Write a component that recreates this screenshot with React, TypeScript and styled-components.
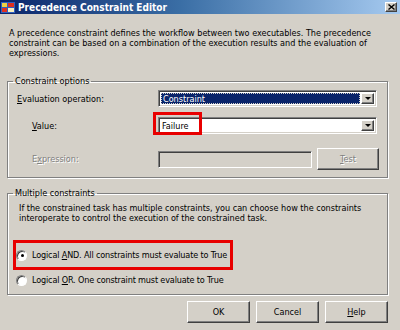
import React from 'react';
import styled, { createGlobalStyle, css } from 'styled-components';

const GlobalStyle = createGlobalStyle`
  html, body {
    margin: 0;
    padding: 0;
    background: #d4d0c8;
  }
  body {
    font-family: 'DejaVu Sans Condensed', 'DejaVu Sans', sans-serif;
    font-stretch: condensed;
    font-size: 9px;
    color: #000;
  }
`;

const raised = css`
  border: 1px solid;
  border-color: #fff #404040 #404040 #fff;
  box-shadow: inset -1px -1px 0 #808080;
`;

const sunken = css`
  border: 1px solid;
  border-color: #808080 #fff #fff #808080;
  box-shadow: inset 1px 1px 0 #404040, inset -1px -1px 0 #d4d0c8;
`;

const Window = styled.div`
  width: 400px;
  height: 330px;
  overflow: hidden;
  display: flex;
  flex-direction: column;
  background: #d4d0c8;
`;

const TitleBar = styled.div`
  height: 14px;
  display: flex;
  align-items: center;
  gap: 3px;
  padding: 0 3px 0 1px;
  background: linear-gradient(to right, #0a246a 0%, #3a6ea5 45%, #a6caf0 100%);
`;

const TitleText = styled.span`
  color: #fff;
  font-weight: bold;
  font-size: 10px;
`;

const CloseButton = styled.div`
  ${raised};
  box-sizing: border-box;
  margin-left: auto;
  width: 12px;
  height: 10px;
  background: #d4d0c8;
  display: flex;
  align-items: center;
  justify-content: center;
`;

const Body = styled.div`
  padding: 14px 12px 0 7px;
  display: flex;
  flex-direction: column;
`;

const Intro = styled.p`
  margin: 0 0 0 2px;
  line-height: 10px;
  white-space: nowrap;
`;

const Group = styled.fieldset<{ $top: number }>`
  margin: ${(p) => p.$top}px 0 0;
  border: 1px solid #808080;
  box-shadow: 1px 1px 0 #fff, inset 1px 1px 0 #fff;
  min-width: 0;
`;

const Legend = styled.legend`
  padding: 0 2px;
  line-height: 12px;
`;

const OptionsGroup = styled(Group)`
  padding: 3px 10px 7px 9px;
`;

const MultipleGroup = styled(Group)`
  padding: 4px 10px 8px 5px;
`;

const LegendOptions = styled(Legend)`
  margin-left: -4px;
`;

const LegendMultiple = styled(Legend)`
  margin-left: 0;
`;

const FormGrid = styled.div`
  display: grid;
  grid-template-columns: 141px 221px;
  row-gap: 10px;
  align-items: center;
`;

const Label = styled.span<{ $indent?: boolean; $disabled?: boolean }>`
  padding-left: ${(p) => (p.$indent ? 15 : 0)}px;
  color: ${(p) => (p.$disabled ? '#808080' : '#000')};
  text-shadow: ${(p) => (p.$disabled ? '1px 1px 0 #fff' : 'none')};
`;

const Combo = styled.div`
  ${sunken};
  position: relative;
  box-sizing: border-box;
  width: 219px;
  height: 17px;
  background: #fff;
  display: flex;
  padding: 2px;
`;

const ComboValue = styled.div<{ $selected?: boolean }>`
  flex: 1;
  display: flex;
  align-items: center;
  padding-left: ${(p) => (p.$selected ? 2 : 1)}px;
  margin-right: 1px;
  color: ${(p) => (p.$selected ? '#fff' : '#000')};
  background: ${(p) => (p.$selected ? '#0a246a' : 'transparent')};
  outline: ${(p) => (p.$selected ? '1px dotted #d4d0c8' : 'none')};
  outline-offset: -1px;
`;

const ComboArrow = styled.div`
  ${raised};
  box-sizing: border-box;
  width: 13px;
  background: #d4d0c8;
  display: flex;
  align-items: center;
  justify-content: center;
`;

const Arrow = styled.span`
  width: 0;
  height: 0;
  border-left: 3px solid transparent;
  border-right: 3px solid transparent;
  border-top: 3px solid #000;
`;

const Highlight = styled.div`
  box-sizing: border-box;
  border: 3px solid #e80000;
`;

const ValueHighlight = styled(Highlight)`
  position: absolute;
  left: -6px;
  top: -6px;
  width: 49px;
  height: 23px;
  pointer-events: none;
`;

const ExpressionRow = styled.div`
  display: flex;
  align-items: center;
  margin-top: 4px;
`;

const TextBox = styled.div`
  ${sunken};
  box-sizing: border-box;
  width: 154px;
  height: 17px;
  background: #d4d0c8;
`;

const Button = styled.button<{ $disabled?: boolean }>`
  ${raised};
  box-sizing: border-box;
  width: 63px;
  height: 22px;
  padding: 0;
  background: #d4d0c8;
  font: inherit;
  color: ${(p) => (p.$disabled ? '#808080' : '#000')};
  text-shadow: ${(p) => (p.$disabled ? '1px 1px 0 #fff' : 'none')};
`;

const TestButton = styled(Button)`
  margin-left: auto;
  width: 62px;
`;

const Description = styled.p`
  margin: 0 0 0 6px;
  line-height: 10px;
  white-space: nowrap;
`;

const RadioRow = styled.div`
  display: flex;
  align-items: center;
  gap: 5px;
  white-space: nowrap;
`;

const HighlightRow = styled(Highlight)`
  display: flex;
  align-items: center;
  gap: 5px;
  width: 220px;
  height: 30px;
  margin-top: 17px;
  white-space: nowrap;
  overflow: visible;
`;

const PlainRow = styled(RadioRow)`
  margin-top: 4px;
  padding-left: 3px;
  height: 12px;
`;

const RadioText = styled.span`
  flex-shrink: 0;
  letter-spacing: -0.15px;
`;

const Radio = styled.span<{ $checked?: boolean }>`
  flex-shrink: 0;
  box-sizing: border-box;
  width: 11px;
  height: 11px;
  border-radius: 50%;
  border: 1px solid;
  border-color: #808080 #fff #fff #808080;
  box-shadow: inset 1px 1px 0 #404040;
  background: #fff;
  display: flex;
  align-items: center;
  justify-content: center;

  &::after {
    content: '';
    width: 3px;
    height: 3px;
    border-radius: 50%;
    background: ${(p) => (p.$checked ? '#000' : 'transparent')};
    margin: 1px 0 0 1px;
  }
`;

const ButtonRow = styled.div`
  display: flex;
  justify-content: flex-end;
  gap: 6px;
  margin-top: 6px;
`;

const TitleIcon = () => (
  <svg width="14" height="13" viewBox="0 0 14 13">
    <rect x="0" y="1" width="14" height="11" fill="#3060c0" />
    <rect x="1" y="2" width="5" height="4" fill="#f0d040" />
    <rect x="7" y="2" width="6" height="4" fill="#e03020" />
    <rect x="1" y="7" width="5" height="4" fill="#e03020" />
    <rect x="7" y="7" width="6" height="4" fill="#f8f0c0" />
  </svg>
);

const CloseIcon = () => (
  <svg width="7" height="6" viewBox="0 0 7 6">
    <path d="M0.5 0.5 L6.5 5.5 M6.5 0.5 L0.5 5.5" stroke="#000" strokeWidth="1.4" />
  </svg>
);

const App = () => (
  <>
    <GlobalStyle />
    <Window>
      <TitleBar>
        <TitleIcon />
        <TitleText>Precedence Constraint Editor</TitleText>
        <CloseButton>
          <CloseIcon />
        </CloseButton>
      </TitleBar>
      <Body>
        <Intro>
          A precedence constraint defines the workflow between two executables. The precedence
          <br />
          constraint can be based on a combination of the execution results and the evaluation of
          <br />
          expressions.
        </Intro>

        <OptionsGroup $top={17}>
          <LegendOptions>Constraint options</LegendOptions>
          <FormGrid>
            <Label>
              <u>E</u>valuation operation:
            </Label>
            <Combo>
              <ComboValue $selected>Constraint</ComboValue>
              <ComboArrow>
                <Arrow />
              </ComboArrow>
            </Combo>

            <Label $indent>
              <u>V</u>alue:
            </Label>
            <Combo>
              <ComboValue>Failure</ComboValue>
              <ComboArrow>
                <Arrow />
              </ComboArrow>
              <ValueHighlight />
            </Combo>

            <Label $indent $disabled style={{ marginTop: 4 }}>
              E<u>x</u>pression:
            </Label>
            <ExpressionRow>
              <TextBox />
              <TestButton $disabled>
                <u>T</u>est
              </TestButton>
            </ExpressionRow>
          </FormGrid>
        </OptionsGroup>

        <MultipleGroup $top={9}>
          <LegendMultiple>Multiple constraints</LegendMultiple>
          <Description>
            If the constrained task has multiple constraints, you can choose how the constraints
            <br />
            interoperate to control the execution of the constrained task.
          </Description>
          <HighlightRow>
            <Radio $checked />
            <RadioText>
              Logical <u>A</u>ND. All constraints must evaluate to True
            </RadioText>
          </HighlightRow>
          <PlainRow>
            <Radio />
            <RadioText>
              Logical <u>O</u>R. One constraint must evaluate to True
            </RadioText>
          </PlainRow>
        </MultipleGroup>

        <ButtonRow>
          <Button>OK</Button>
          <Button>Cancel</Button>
          <Button>
            <u>H</u>elp
          </Button>
        </ButtonRow>
      </Body>
    </Window>
  </>
);

export default App;
